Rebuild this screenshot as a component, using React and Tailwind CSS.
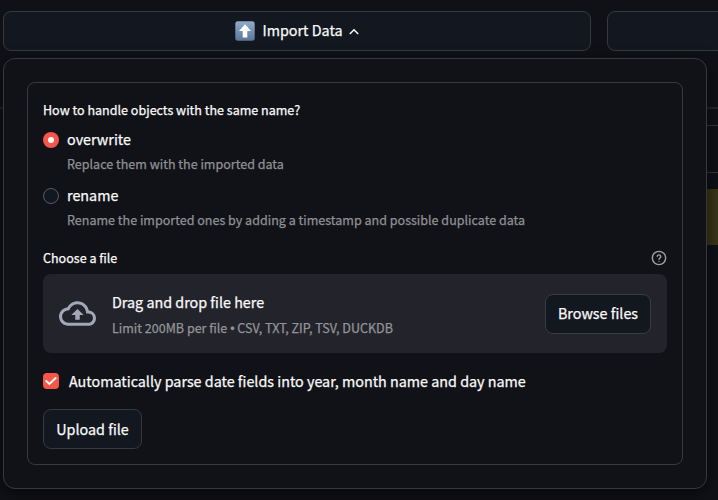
import React from 'react';

function UpArrowEmoji() {
  return (
    <svg className="h-5 w-5 shrink-0" viewBox="0 0 20 20">
      <defs>
        <linearGradient id="tile" x1="0" y1="0" x2="0" y2="1">
          <stop offset="0" stopColor="#91acc9" />
          <stop offset="1" stopColor="#5c7698" />
        </linearGradient>
      </defs>
      <rect x="0.3" y="0.3" width="19.4" height="19.4" rx="2.6" fill="url(#tile)" />
      <path d="M10 3.2 16 10h-3.7v6.6H7.7V10H4z" fill="#fff" />
    </svg>
  );
}

function Radio({ checked }) {
  return checked ? (
    <span className="flex h-4 w-4 shrink-0 items-center justify-center rounded-full bg-[#f4564a]">
      <span className="h-1.5 w-1.5 rounded-full bg-[#fafafa]" />
    </span>
  ) : (
    <span className="h-4 w-4 shrink-0 rounded-full border border-[#5b5c61] bg-[#131720]" />
  );
}

function Option({ checked, label, caption }) {
  return (
    <div className="h-14">
      <div className="flex h-6 items-center gap-2">
        <Radio checked={checked} />
        <span className="-mt-0.5 text-[14.34px] leading-[22px]">{label}</span>
      </div>
      <div className="h-6 pl-6 text-[12.54px] leading-6 text-[#8f9094]">{caption}</div>
    </div>
  );
}

function ImportPopover() {
  return (
    <div className="absolute left-[3px] top-[58px] h-[431px] w-[704px] rounded-xl border border-[#38393f] bg-[#111217] p-[23px] shadow-[0_4px_16px_rgba(0,0,0,0.6)]">
      <div className="flex h-[383px] flex-col rounded-lg border border-[#38393f] px-[15px] pt-[16px]">
        <div className="h-[29px] text-[12.54px] leading-[21px]">How to handle objects with the same name?</div>
        <Option checked label="overwrite" caption="Replace them with the imported data" />
        <Option label="rename" caption="Rename the imported ones by adding a timestamp and possible duplicate data" />

        <div className="mt-[8px] flex h-[21px] items-center justify-between text-[12.54px]">
          <span>Choose a file</span>
          <svg className="-mt-px h-4 w-4" viewBox="0 0 24 24" fill="none" stroke="#a0a1a4" strokeWidth="2.1" strokeLinecap="round" strokeLinejoin="round">
            <circle cx="12" cy="12" r="10" />
            <path d="M9.3 9.3a2.75 2.75 0 0 1 5.4.7c0 1.9-2.7 2.3-2.7 4M12 17h.01" />
          </svg>
        </div>

        <div className="mt-[5px] flex h-[79px] shrink-0 items-center rounded-lg bg-[#23242b] px-4">
          <svg className="h-[37px] w-[37px] shrink-0" viewBox="0 0 24 24" fill="#a3a8b8">
            <path d="M19.35 10.04C18.67 6.59 15.64 4 12 4 9.11 4 6.6 5.64 5.35 8.04 2.34 8.36 0 10.91 0 14c0 3.31 2.69 6 6 6h13c2.76 0 5-2.24 5-5 0-2.64-2.05-4.78-4.65-4.96zM19 18H6c-2.21 0-4-1.79-4-4 0-2.05 1.53-3.76 3.56-3.97l1.07-.11.5-.95A5.469 5.469 0 0 1 12 6c2.62 0 4.88 1.86 5.39 4.43l.3 1.5 1.53.11A2.98 2.98 0 0 1 22 15c0 1.65-1.35 3-3 3zM8 13h2.55v3h2.9v-3H16l-4-4z" />
          </svg>
          <div className="ml-4 grow">
            <div className="text-[14.34px] leading-[26px]">Drag and drop file here</div>
            <div className="-mb-px pt-px text-[12.54px] leading-6 text-[#939498]">
              Limit 200MB per file <span className="font-['Liberation_Sans',sans-serif] leading-none">•</span> CSV, TXT, ZIP, TSV, DUCKDB
            </div>
          </div>
          <button className="h-10 w-[106px] shrink-0 rounded-lg border border-[#3a3c43] bg-[#131720] pb-0.5 text-[14.34px]">Browse files</button>
        </div>

        <div className="mt-4 flex h-6 items-center gap-[10px]">
          <span className="flex h-4 w-4 shrink-0 items-center justify-center rounded bg-[#f4564a]">
            <svg className="h-4 w-4" viewBox="0 0 16 16" fill="none" stroke="#fafafa" strokeWidth="2">
              <path d="M2.7 7.6 6.4 11l6.8-6.4" />
            </svg>
          </span>
          <span className="text-[14.33px]">Automatically parse date fields into year, month name and day name</span>
        </div>

        <button className="mt-4 h-10 w-[99px] shrink-0 rounded-lg border border-[#38393f] bg-[#131720] text-[14.34px]">Upload file</button>
      </div>
    </div>
  );
}

export default function App() {
  return (
    <div className="relative h-[500px] w-[718px] overflow-hidden whitespace-nowrap bg-[#101116] font-['Noto_Sans_CJK_SC',sans-serif] text-[#fafafa] [-webkit-text-stroke:0.25px_currentColor]">
      <div className="flex gap-4 pl-[3px] pt-[11px]">
        <button className="flex h-10 w-[588px] shrink-0 items-center justify-center rounded-lg border border-[#38393f] bg-[#131720] text-[14.34px]">
          <UpArrowEmoji />
          <span className="-mt-0.5 ml-[7px]">Import Data</span>
          <svg className="ml-[6px] mt-[2px] h-[10px] w-[10px]" viewBox="0 0 10 10" fill="none" stroke="#fafafa" strokeWidth="1.5">
            <path d="M.8 7 5 2.8 9.2 7" />
          </svg>
        </button>
        <div className="h-10 w-[588px] shrink-0 rounded-lg border border-[#38393f] bg-[#131720]" />
      </div>
      <div className="mt-[56px] h-0.5 bg-[#24252b]" />
      <div className="ml-[600px] mt-4 h-12 border-y border-[#36373d]" />
      <div className="ml-[600px] mt-4 h-14 bg-[#393618]" />
      <ImportPopover />
    </div>
  );
}
